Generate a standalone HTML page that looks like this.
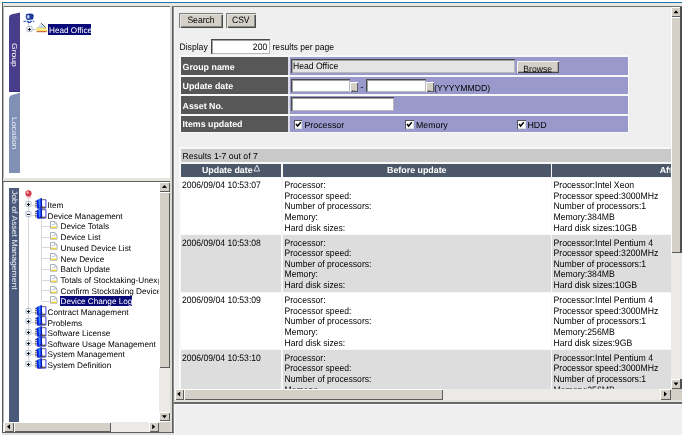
<!DOCTYPE html>
<html><head><meta charset="utf-8"><title>Device Change Log</title>
<style>
html,body{margin:0;padding:0;background:#fff;}
body{width:685px;height:440px;position:relative;overflow:hidden;font-family:"Liberation Sans",Arial,sans-serif;}
#root{position:absolute;left:0;top:0;width:685px;height:440px;will-change:transform;}
.b{position:absolute;display:block;}
#txt{font-family:"Liberation Sans",Arial,sans-serif;text-rendering:geometricPrecision;fill:#000;}
.vt{position:absolute;white-space:nowrap;writing-mode:vertical-rl;line-height:11px;text-align:left;transform:scaleX(0.84);transform-origin:50% 50%;text-rendering:geometricPrecision;}
</style></head><body><div id="root">
<div class="b" style="left:2px;top:2px;width:680px;height:1px;background:#1c78a8;"></div>
<div class="b" style="left:2px;top:3px;width:680px;height:3px;background:#e9e7e2;"></div>
<div class="b" style="left:2px;top:6px;width:680px;height:1px;background:#6f6f6f;"></div>
<div class="b" style="left:2px;top:2.6px;width:1px;height:432px;background:#585858;"></div>
<div class="b" style="left:3px;top:6px;width:1px;height:428px;background:#b4b4b4;"></div>
<div class="b" style="left:3px;top:177.75px;width:167px;height:2.75px;background:#e6e4de;"></div>
<div class="b" style="left:3px;top:180.5px;width:167px;height:1.5px;background:#606060;"></div>
<div class="b" style="left:170px;top:6px;width:2px;height:428px;background:#dddbd6;"></div>
<div class="b" style="left:172px;top:6px;width:1px;height:428px;background:#5f5f5f;"></div>
<div class="b" style="left:173px;top:6px;width:1px;height:428px;background:#8c8c8c;"></div>
<div class="b" style="left:2px;top:432px;width:172px;height:1px;background:#5f5f5f;"></div>
<div class="b" style="left:2px;top:433px;width:680px;height:2px;background:#e2e0da;"></div>
<div class="b" style="left:174px;top:7px;width:497px;height:382px;background:#efefef;"></div>
<div class="b" style="left:174px;top:7px;width:1.2px;height:382px;background:#f8f8f8;"></div>
<div class="b" style="left:174px;top:399.5px;width:508px;height:2.5px;background:#e4e2dc;"></div>
<div class="b" style="left:174px;top:402px;width:508px;height:1.75px;background:#666;"></div>
<div class="b" style="left:174px;top:403.75px;width:508px;height:31.25px;background:#efefef;"></div>
<div class="b" style="left:174px;top:404px;width:508px;height:1px;background:#fafafa;"></div>
<div class="b" style="left:174px;top:404px;width:1px;height:31px;background:#fafafa;"></div>
<svg class="b" style="left:0;top:0" width="30" height="180"><path d="M9,18 Q9,15 12,14.2 L20,12.4 L20,92 L9,92 Z" fill="#483d8b"/><path d="M9,91.2 H20 V92 H9 Z" fill="#2c2a82"/><path d="M9,99 Q9,96 12,95 L20,92.8 L20,173 L9,173 Z" fill="#8191b5"/></svg>
<div class="vt" style="left:9px;top:43px;width:11px;height:24px;color:#fff;font-size:8.6px;">Group</div>
<div class="vt" style="left:9px;top:117px;width:11px;height:34px;color:#e6eaf6;font-size:8.6px;">Location</div>
<svg class="b" style="left:22px;top:11.6px" width="14" height="12" viewBox="0 0 14 12"><path d="M4,2.2 Q7,1.2 10.5,1.8 L11.8,3.6 L11,7.6 L5,8.1 L3.6,5 Z" fill="#1c3a9c"/><path d="M4.7,3.4 L7.3,3.1 L7.6,6.2 L5.3,6.6 Z" fill="#c4d2f6"/><path d="M1.5,9.4 H12.3" stroke="#4a6cd0" stroke-width="1.1" stroke-dasharray="2.4 0.7"/><path d="M5.5,10.5 H9" stroke="#2a48b0" stroke-width="1"/></svg>
<div class="b" style="left:28px;top:23px;width:1px;height:4px;background:#c8c8c8;"></div>
<div class="b" style="left:32px;top:29px;width:5px;height:1px;background:#c8c8c8;"></div>
<svg class="b" style="left:25.9px;top:25.6px" width="7" height="7" viewBox="0 0 7 7"><rect x="0.9" y="0.5" width="5.1" height="5.1" rx="0.8" fill="#fcfcfd" stroke="#a6b6d0" stroke-width="0.9"/><path d="M1.9,3.45 H5" stroke="#111" stroke-width="1"/><path d="M3.45,1.9 V5" stroke="#111" stroke-width="1"/></svg>
<svg class="b" style="left:36px;top:22px" width="12" height="11" viewBox="0 0 12 11"><path d="M0.4,5.6 L2.4,5 L9.6,5 L10.8,5.8 L10.8,9.6 L0.4,9.6 Z" fill="#f5e067"/><path d="M2,5.6 L5.2,1.4 L9.4,5.6 Z" fill="#f2f6ff" stroke="#a8b8d8" stroke-width="0.6"/><path d="M4.2,4.8 L5.4,3.2 L7,4.8 Z" fill="#7fb8f4"/><path d="M5.2,1.3 L9.7,5.4" stroke="#2a2a2a" stroke-width="0.8"/><path d="M0.4,7.4 H10.8" stroke="#fff7b0" stroke-width="0.8"/><path d="M0.6,9.7 H10.8" stroke="#c83a22" stroke-width="0.9"/></svg>
<div class="b" style="left:48px;top:24px;width:43px;height:10.6px;background:#0a0a78;"></div>
<div class="b" style="left:9px;top:187.5px;width:10px;height:234px;background:#4b5a7b;"></div>
<div class="vt" style="left:8.5px;top:189.6px;width:11px;height:102px;color:#eceff8;font-size:8.65px;transform:scaleX(0.9);">Job of Asset Management</div>
<svg class="b" style="left:24px;top:189px" width="9" height="11"><ellipse cx="5" cy="8.3" rx="2.6" ry="1.2" fill="#f6ccd2"/><circle cx="4.5" cy="4.4" r="3.1" fill="#d23a4a"/><circle cx="3.7" cy="3.5" r="1.2" fill="#f8b0b8"/></svg>
<div class="b" style="left:28px;top:197px;width:1px;height:166px;background:#d8d8d8;"></div>
<div class="b" style="left:41px;top:220px;width:1px;height:81px;background:#d8d8d8;"></div>
<div class="b" style="left:32px;top:204.5px;width:4px;height:1px;background:#d8d8d8;"></div>
<svg class="b" style="left:25px;top:200.9px" width="7" height="7" viewBox="0 0 7 7"><rect x="0.9" y="0.5" width="5.1" height="5.1" rx="0.8" fill="#fcfcfd" stroke="#a6b6d0" stroke-width="0.9"/><path d="M1.9,3.45 H5" stroke="#111" stroke-width="1"/><path d="M3.45,1.9 V5" stroke="#111" stroke-width="1"/></svg>
<svg class="b" style="left:35px;top:197.7px" width="12" height="11" viewBox="0 0 12 11"><path d="M0,3.4 H2.6 M0,5.3 H2.6 M0,7.2 H2.6 M0,8.9 H2.6" stroke="#3a3a3a" stroke-width="0.8"/><path d="M7,1.8 L10.6,1.8 L10.6,8.6 L7,8.8 Z" fill="#fff"/><path d="M6.8,1.7 L10.8,1.7" stroke="#555" stroke-width="0.9"/><path d="M10.9,1.6 L10.9,10" stroke="#2a2af0" stroke-width="0.9"/><path d="M4,9.2 L10.6,8.6 L10.6,9.8 L4,10.4 Z" fill="#5c5a22"/><path d="M2.4,10.5 L10.9,10.2" stroke="#2222d8" stroke-width="0.7"/><path d="M1.5,2.2 L6.6,0.1 L7.2,9 L2.2,10.6 Z" fill="#0c20e6"/><path d="M3.4,1.5 L5.3,0.7 L5.6,7.5 L4,9.9 Z" fill="#2f86ff"/><path d="M5.9,0.4 L6.6,0.1 L7.2,9 L6.4,9.3 Z" fill="#0810a8"/></svg>
<div class="b" style="left:32px;top:215px;width:4px;height:1px;background:#d8d8d8;"></div>
<svg class="b" style="left:25px;top:211.4px" width="7" height="7" viewBox="0 0 7 7"><rect x="0.9" y="0.5" width="5.1" height="5.1" rx="0.8" fill="#fcfcfd" stroke="#a6b6d0" stroke-width="0.9"/><path d="M1.9,3.45 H5" stroke="#111" stroke-width="1"/></svg>
<svg class="b" style="left:35px;top:208.2px" width="12" height="11" viewBox="0 0 12 11"><path d="M0,3.4 H2.6 M0,5.3 H2.6 M0,7.2 H2.6 M0,8.9 H2.6" stroke="#3a3a3a" stroke-width="0.8"/><path d="M7,1.8 L10.6,1.8 L10.6,8.6 L7,8.8 Z" fill="#fff"/><path d="M6.8,1.7 L10.8,1.7" stroke="#555" stroke-width="0.9"/><path d="M10.9,1.6 L10.9,10" stroke="#2a2af0" stroke-width="0.9"/><path d="M4,9.2 L10.6,8.6 L10.6,9.8 L4,10.4 Z" fill="#5c5a22"/><path d="M2.4,10.5 L10.9,10.2" stroke="#2222d8" stroke-width="0.7"/><path d="M1.5,2.2 L6.6,0.1 L7.2,9 L2.2,10.6 Z" fill="#0c20e6"/><path d="M3.4,1.5 L5.3,0.7 L5.6,7.5 L4,9.9 Z" fill="#2f86ff"/><path d="M5.9,0.4 L6.6,0.1 L7.2,9 L6.4,9.3 Z" fill="#0810a8"/></svg>
<div class="b" style="left:32px;top:311.5px;width:4px;height:1px;background:#d8d8d8;"></div>
<svg class="b" style="left:25px;top:307.9px" width="7" height="7" viewBox="0 0 7 7"><rect x="0.9" y="0.5" width="5.1" height="5.1" rx="0.8" fill="#fcfcfd" stroke="#a6b6d0" stroke-width="0.9"/><path d="M1.9,3.45 H5" stroke="#111" stroke-width="1"/><path d="M3.45,1.9 V5" stroke="#111" stroke-width="1"/></svg>
<svg class="b" style="left:35px;top:304.7px" width="12" height="11" viewBox="0 0 12 11"><path d="M0,3.4 H2.6 M0,5.3 H2.6 M0,7.2 H2.6 M0,8.9 H2.6" stroke="#3a3a3a" stroke-width="0.8"/><path d="M7,1.8 L10.6,1.8 L10.6,8.6 L7,8.8 Z" fill="#fff"/><path d="M6.8,1.7 L10.8,1.7" stroke="#555" stroke-width="0.9"/><path d="M10.9,1.6 L10.9,10" stroke="#2a2af0" stroke-width="0.9"/><path d="M4,9.2 L10.6,8.6 L10.6,9.8 L4,10.4 Z" fill="#5c5a22"/><path d="M2.4,10.5 L10.9,10.2" stroke="#2222d8" stroke-width="0.7"/><path d="M1.5,2.2 L6.6,0.1 L7.2,9 L2.2,10.6 Z" fill="#0c20e6"/><path d="M3.4,1.5 L5.3,0.7 L5.6,7.5 L4,9.9 Z" fill="#2f86ff"/><path d="M5.9,0.4 L6.6,0.1 L7.2,9 L6.4,9.3 Z" fill="#0810a8"/></svg>
<div class="b" style="left:32px;top:322px;width:4px;height:1px;background:#d8d8d8;"></div>
<svg class="b" style="left:25px;top:318.4px" width="7" height="7" viewBox="0 0 7 7"><rect x="0.9" y="0.5" width="5.1" height="5.1" rx="0.8" fill="#fcfcfd" stroke="#a6b6d0" stroke-width="0.9"/><path d="M1.9,3.45 H5" stroke="#111" stroke-width="1"/><path d="M3.45,1.9 V5" stroke="#111" stroke-width="1"/></svg>
<svg class="b" style="left:35px;top:315.2px" width="12" height="11" viewBox="0 0 12 11"><path d="M0,3.4 H2.6 M0,5.3 H2.6 M0,7.2 H2.6 M0,8.9 H2.6" stroke="#3a3a3a" stroke-width="0.8"/><path d="M7,1.8 L10.6,1.8 L10.6,8.6 L7,8.8 Z" fill="#fff"/><path d="M6.8,1.7 L10.8,1.7" stroke="#555" stroke-width="0.9"/><path d="M10.9,1.6 L10.9,10" stroke="#2a2af0" stroke-width="0.9"/><path d="M4,9.2 L10.6,8.6 L10.6,9.8 L4,10.4 Z" fill="#5c5a22"/><path d="M2.4,10.5 L10.9,10.2" stroke="#2222d8" stroke-width="0.7"/><path d="M1.5,2.2 L6.6,0.1 L7.2,9 L2.2,10.6 Z" fill="#0c20e6"/><path d="M3.4,1.5 L5.3,0.7 L5.6,7.5 L4,9.9 Z" fill="#2f86ff"/><path d="M5.9,0.4 L6.6,0.1 L7.2,9 L6.4,9.3 Z" fill="#0810a8"/></svg>
<div class="b" style="left:32px;top:332.5px;width:4px;height:1px;background:#d8d8d8;"></div>
<svg class="b" style="left:25px;top:328.9px" width="7" height="7" viewBox="0 0 7 7"><rect x="0.9" y="0.5" width="5.1" height="5.1" rx="0.8" fill="#fcfcfd" stroke="#a6b6d0" stroke-width="0.9"/><path d="M1.9,3.45 H5" stroke="#111" stroke-width="1"/><path d="M3.45,1.9 V5" stroke="#111" stroke-width="1"/></svg>
<svg class="b" style="left:35px;top:325.7px" width="12" height="11" viewBox="0 0 12 11"><path d="M0,3.4 H2.6 M0,5.3 H2.6 M0,7.2 H2.6 M0,8.9 H2.6" stroke="#3a3a3a" stroke-width="0.8"/><path d="M7,1.8 L10.6,1.8 L10.6,8.6 L7,8.8 Z" fill="#fff"/><path d="M6.8,1.7 L10.8,1.7" stroke="#555" stroke-width="0.9"/><path d="M10.9,1.6 L10.9,10" stroke="#2a2af0" stroke-width="0.9"/><path d="M4,9.2 L10.6,8.6 L10.6,9.8 L4,10.4 Z" fill="#5c5a22"/><path d="M2.4,10.5 L10.9,10.2" stroke="#2222d8" stroke-width="0.7"/><path d="M1.5,2.2 L6.6,0.1 L7.2,9 L2.2,10.6 Z" fill="#0c20e6"/><path d="M3.4,1.5 L5.3,0.7 L5.6,7.5 L4,9.9 Z" fill="#2f86ff"/><path d="M5.9,0.4 L6.6,0.1 L7.2,9 L6.4,9.3 Z" fill="#0810a8"/></svg>
<div class="b" style="left:32px;top:343.25px;width:4px;height:1px;background:#d8d8d8;"></div>
<svg class="b" style="left:25px;top:339.65px" width="7" height="7" viewBox="0 0 7 7"><rect x="0.9" y="0.5" width="5.1" height="5.1" rx="0.8" fill="#fcfcfd" stroke="#a6b6d0" stroke-width="0.9"/><path d="M1.9,3.45 H5" stroke="#111" stroke-width="1"/><path d="M3.45,1.9 V5" stroke="#111" stroke-width="1"/></svg>
<svg class="b" style="left:35px;top:336.45px" width="12" height="11" viewBox="0 0 12 11"><path d="M0,3.4 H2.6 M0,5.3 H2.6 M0,7.2 H2.6 M0,8.9 H2.6" stroke="#3a3a3a" stroke-width="0.8"/><path d="M7,1.8 L10.6,1.8 L10.6,8.6 L7,8.8 Z" fill="#fff"/><path d="M6.8,1.7 L10.8,1.7" stroke="#555" stroke-width="0.9"/><path d="M10.9,1.6 L10.9,10" stroke="#2a2af0" stroke-width="0.9"/><path d="M4,9.2 L10.6,8.6 L10.6,9.8 L4,10.4 Z" fill="#5c5a22"/><path d="M2.4,10.5 L10.9,10.2" stroke="#2222d8" stroke-width="0.7"/><path d="M1.5,2.2 L6.6,0.1 L7.2,9 L2.2,10.6 Z" fill="#0c20e6"/><path d="M3.4,1.5 L5.3,0.7 L5.6,7.5 L4,9.9 Z" fill="#2f86ff"/><path d="M5.9,0.4 L6.6,0.1 L7.2,9 L6.4,9.3 Z" fill="#0810a8"/></svg>
<div class="b" style="left:32px;top:353.75px;width:4px;height:1px;background:#d8d8d8;"></div>
<svg class="b" style="left:25px;top:350.15px" width="7" height="7" viewBox="0 0 7 7"><rect x="0.9" y="0.5" width="5.1" height="5.1" rx="0.8" fill="#fcfcfd" stroke="#a6b6d0" stroke-width="0.9"/><path d="M1.9,3.45 H5" stroke="#111" stroke-width="1"/><path d="M3.45,1.9 V5" stroke="#111" stroke-width="1"/></svg>
<svg class="b" style="left:35px;top:346.95px" width="12" height="11" viewBox="0 0 12 11"><path d="M0,3.4 H2.6 M0,5.3 H2.6 M0,7.2 H2.6 M0,8.9 H2.6" stroke="#3a3a3a" stroke-width="0.8"/><path d="M7,1.8 L10.6,1.8 L10.6,8.6 L7,8.8 Z" fill="#fff"/><path d="M6.8,1.7 L10.8,1.7" stroke="#555" stroke-width="0.9"/><path d="M10.9,1.6 L10.9,10" stroke="#2a2af0" stroke-width="0.9"/><path d="M4,9.2 L10.6,8.6 L10.6,9.8 L4,10.4 Z" fill="#5c5a22"/><path d="M2.4,10.5 L10.9,10.2" stroke="#2222d8" stroke-width="0.7"/><path d="M1.5,2.2 L6.6,0.1 L7.2,9 L2.2,10.6 Z" fill="#0c20e6"/><path d="M3.4,1.5 L5.3,0.7 L5.6,7.5 L4,9.9 Z" fill="#2f86ff"/><path d="M5.9,0.4 L6.6,0.1 L7.2,9 L6.4,9.3 Z" fill="#0810a8"/></svg>
<div class="b" style="left:32px;top:364.5px;width:4px;height:1px;background:#d8d8d8;"></div>
<svg class="b" style="left:25px;top:360.9px" width="7" height="7" viewBox="0 0 7 7"><rect x="0.9" y="0.5" width="5.1" height="5.1" rx="0.8" fill="#fcfcfd" stroke="#a6b6d0" stroke-width="0.9"/><path d="M1.9,3.45 H5" stroke="#111" stroke-width="1"/><path d="M3.45,1.9 V5" stroke="#111" stroke-width="1"/></svg>
<svg class="b" style="left:35px;top:357.7px" width="12" height="11" viewBox="0 0 12 11"><path d="M0,3.4 H2.6 M0,5.3 H2.6 M0,7.2 H2.6 M0,8.9 H2.6" stroke="#3a3a3a" stroke-width="0.8"/><path d="M7,1.8 L10.6,1.8 L10.6,8.6 L7,8.8 Z" fill="#fff"/><path d="M6.8,1.7 L10.8,1.7" stroke="#555" stroke-width="0.9"/><path d="M10.9,1.6 L10.9,10" stroke="#2a2af0" stroke-width="0.9"/><path d="M4,9.2 L10.6,8.6 L10.6,9.8 L4,10.4 Z" fill="#5c5a22"/><path d="M2.4,10.5 L10.9,10.2" stroke="#2222d8" stroke-width="0.7"/><path d="M1.5,2.2 L6.6,0.1 L7.2,9 L2.2,10.6 Z" fill="#0c20e6"/><path d="M3.4,1.5 L5.3,0.7 L5.6,7.5 L4,9.9 Z" fill="#2f86ff"/><path d="M5.9,0.4 L6.6,0.1 L7.2,9 L6.4,9.3 Z" fill="#0810a8"/></svg>
<div class="b" style="left:42px;top:225.5px;width:8px;height:1px;background:#d8d8d8;"></div>
<svg class="b" style="left:49.6px;top:220.8px" width="8" height="8" viewBox="0 0 8 8"><path d="M0.5,0.5 L4.8,0.5 L7,2.6 L7,7.2 L0.5,7.2 Z" fill="#fff" stroke="#929cb2" stroke-width="0.8"/><path d="M4.6,0.6 L4.6,2.8 L6.9,2.8" fill="none" stroke="#929cb2" stroke-width="0.6"/><path d="M1,6.4 L6.8,6.4" stroke="#f2d43a" stroke-width="1.5"/><path d="M1.8,3.6 L4.6,3.6" stroke="#aab4d8" stroke-width="0.7"/></svg>
<div class="b" style="left:42px;top:236.5px;width:8px;height:1px;background:#d8d8d8;"></div>
<svg class="b" style="left:49.6px;top:231.8px" width="8" height="8" viewBox="0 0 8 8"><path d="M0.5,0.5 L4.8,0.5 L7,2.6 L7,7.2 L0.5,7.2 Z" fill="#fff" stroke="#929cb2" stroke-width="0.8"/><path d="M4.6,0.6 L4.6,2.8 L6.9,2.8" fill="none" stroke="#929cb2" stroke-width="0.6"/><path d="M1,6.4 L6.8,6.4" stroke="#f2d43a" stroke-width="1.5"/><path d="M1.8,3.6 L4.6,3.6" stroke="#aab4d8" stroke-width="0.7"/></svg>
<div class="b" style="left:42px;top:247px;width:8px;height:1px;background:#d8d8d8;"></div>
<svg class="b" style="left:49.6px;top:242.3px" width="8" height="8" viewBox="0 0 8 8"><path d="M0.5,0.5 L4.8,0.5 L7,2.6 L7,7.2 L0.5,7.2 Z" fill="#fff" stroke="#929cb2" stroke-width="0.8"/><path d="M4.6,0.6 L4.6,2.8 L6.9,2.8" fill="none" stroke="#929cb2" stroke-width="0.6"/><path d="M1,6.4 L6.8,6.4" stroke="#f2d43a" stroke-width="1.5"/><path d="M1.8,3.6 L4.6,3.6" stroke="#aab4d8" stroke-width="0.7"/></svg>
<div class="b" style="left:42px;top:258px;width:8px;height:1px;background:#d8d8d8;"></div>
<svg class="b" style="left:49.6px;top:253.3px" width="8" height="8" viewBox="0 0 8 8"><path d="M0.5,0.5 L4.8,0.5 L7,2.6 L7,7.2 L0.5,7.2 Z" fill="#fff" stroke="#929cb2" stroke-width="0.8"/><path d="M4.6,0.6 L4.6,2.8 L6.9,2.8" fill="none" stroke="#929cb2" stroke-width="0.6"/><path d="M1,6.4 L6.8,6.4" stroke="#f2d43a" stroke-width="1.5"/><path d="M1.8,3.6 L4.6,3.6" stroke="#aab4d8" stroke-width="0.7"/></svg>
<div class="b" style="left:42px;top:268.8px;width:8px;height:1px;background:#d8d8d8;"></div>
<svg class="b" style="left:49.6px;top:264.1px" width="8" height="8" viewBox="0 0 8 8"><path d="M0.5,0.5 L4.8,0.5 L7,2.6 L7,7.2 L0.5,7.2 Z" fill="#fff" stroke="#929cb2" stroke-width="0.8"/><path d="M4.6,0.6 L4.6,2.8 L6.9,2.8" fill="none" stroke="#929cb2" stroke-width="0.6"/><path d="M1,6.4 L6.8,6.4" stroke="#f2d43a" stroke-width="1.5"/><path d="M1.8,3.6 L4.6,3.6" stroke="#aab4d8" stroke-width="0.7"/></svg>
<div class="b" style="left:42px;top:279.5px;width:8px;height:1px;background:#d8d8d8;"></div>
<svg class="b" style="left:49.6px;top:274.8px" width="8" height="8" viewBox="0 0 8 8"><path d="M0.5,0.5 L4.8,0.5 L7,2.6 L7,7.2 L0.5,7.2 Z" fill="#fff" stroke="#929cb2" stroke-width="0.8"/><path d="M4.6,0.6 L4.6,2.8 L6.9,2.8" fill="none" stroke="#929cb2" stroke-width="0.6"/><path d="M1,6.4 L6.8,6.4" stroke="#f2d43a" stroke-width="1.5"/><path d="M1.8,3.6 L4.6,3.6" stroke="#aab4d8" stroke-width="0.7"/></svg>
<div class="b" style="left:42px;top:290.25px;width:8px;height:1px;background:#d8d8d8;"></div>
<svg class="b" style="left:49.6px;top:285.55px" width="8" height="8" viewBox="0 0 8 8"><path d="M0.5,0.5 L4.8,0.5 L7,2.6 L7,7.2 L0.5,7.2 Z" fill="#fff" stroke="#929cb2" stroke-width="0.8"/><path d="M4.6,0.6 L4.6,2.8 L6.9,2.8" fill="none" stroke="#929cb2" stroke-width="0.6"/><path d="M1,6.4 L6.8,6.4" stroke="#f2d43a" stroke-width="1.5"/><path d="M1.8,3.6 L4.6,3.6" stroke="#aab4d8" stroke-width="0.7"/></svg>
<div class="b" style="left:42px;top:300.75px;width:8px;height:1px;background:#d8d8d8;"></div>
<svg class="b" style="left:49.6px;top:296.05px" width="8" height="8" viewBox="0 0 8 8"><path d="M0.5,0.5 L4.8,0.5 L7,2.6 L7,7.2 L0.5,7.2 Z" fill="#fff" stroke="#929cb2" stroke-width="0.8"/><path d="M4.6,0.6 L4.6,2.8 L6.9,2.8" fill="none" stroke="#929cb2" stroke-width="0.6"/><path d="M1,6.4 L6.8,6.4" stroke="#f2d43a" stroke-width="1.5"/><path d="M1.8,3.6 L4.6,3.6" stroke="#aab4d8" stroke-width="0.7"/></svg>
<div class="b" style="left:60px;top:295.95px;width:72px;height:10.1px;background:#0a0a78;"></div>
<div class="b" style="left:159px;top:182px;width:10.75px;height:239px;background:#eceae6;"></div>
<div class="b" style="left:159px;top:182px;width:10.75px;height:9.75px;background:#d4d0c8;box-shadow:inset 1px 1px 0 #fff,inset -1px -1px 0 #5c5c5c;"></div>
<div class="b" style="left:159px;top:191.75px;width:10.75px;height:176px;background:#d4d0c8;box-shadow:inset 1px 1px 0 #fff,inset -1px -1px 0 #5c5c5c;"></div>
<div class="b" style="left:159px;top:411.6px;width:10.75px;height:9.65px;background:#d4d0c8;box-shadow:inset 1px 1px 0 #fff,inset -1px -1px 0 #5c5c5c;"></div>
<div class="b" style="left:3px;top:421.5px;width:156px;height:10.5px;background:#eceae6;"></div>
<div class="b" style="left:4px;top:421.5px;width:9.5px;height:10.5px;background:#d4d0c8;box-shadow:inset 1px 1px 0 #fff,inset -1px -1px 0 #5c5c5c;"></div>
<div class="b" style="left:13.5px;top:421.5px;width:97.5px;height:10.5px;background:#d4d0c8;box-shadow:inset 1px 1px 0 #fff,inset -1px -1px 0 #5c5c5c;"></div>
<div class="b" style="left:148.5px;top:421.5px;width:10px;height:10.5px;background:#d4d0c8;box-shadow:inset 1px 1px 0 #fff,inset -1px -1px 0 #5c5c5c;"></div>
<div class="b" style="left:158.5px;top:421.5px;width:11px;height:10.5px;background:#d4d0c8;"></div>
<div class="b" style="left:179px;top:12.5px;width:44px;height:15px;background:#d4d0c8;box-shadow:inset 1px 1px 0 #7c7c7c,inset 2px 2px 0 #e6e4de,inset -1px -1px 0 #484848,inset -2px -2px 0 #8a8a86;"></div>
<div class="b" style="left:226px;top:12.5px;width:29.5px;height:15px;background:#d4d0c8;box-shadow:inset 1px 1px 0 #7c7c7c,inset 2px 2px 0 #e6e4de,inset -1px -1px 0 #484848,inset -2px -2px 0 #8a8a86;"></div>
<div class="b" style="left:210.5px;top:39px;width:59px;height:14.5px;background:#fff;box-shadow:inset 1px 1px 0 #4a4a4a,inset 2px 2px 0 #a0a0a0,inset -1px -1px 0 #b8b8b8;"></div>
<div class="b" style="left:179.3px;top:55.4px;width:449.5px;height:77.8px;background:#f8f8f8;"></div>
<div class="b" style="left:180.5px;top:57px;width:107px;height:17.9px;background:#575757;"></div>
<div class="b" style="left:287.5px;top:57px;width:2px;height:17.9px;background:#dcdcea;"></div>
<div class="b" style="left:289.5px;top:57px;width:338px;height:17.9px;background:#9999cc;"></div>
<div class="b" style="left:180.5px;top:76.75px;width:107px;height:17.25px;background:#575757;"></div>
<div class="b" style="left:287.5px;top:76.75px;width:2px;height:17.25px;background:#dcdcea;"></div>
<div class="b" style="left:289.5px;top:76.75px;width:338px;height:17.25px;background:#9999cc;"></div>
<div class="b" style="left:180.5px;top:96px;width:107px;height:17.5px;background:#575757;"></div>
<div class="b" style="left:287.5px;top:96px;width:2px;height:17.5px;background:#dcdcea;"></div>
<div class="b" style="left:289.5px;top:96px;width:338px;height:17.5px;background:#9999cc;"></div>
<div class="b" style="left:180.5px;top:115.75px;width:107px;height:15.9px;background:#575757;"></div>
<div class="b" style="left:287.5px;top:115.75px;width:2px;height:15.9px;background:#dcdcea;"></div>
<div class="b" style="left:289.5px;top:115.75px;width:338px;height:15.9px;background:#9999cc;"></div>
<div class="b" style="left:291px;top:59px;width:223.5px;height:13.9px;background:#e4e4e4;box-shadow:inset 1px 1px 0 #4a4a4a,inset 2px 2px 0 #a0a0a0,inset -1px -1px 0 #b8b8b8;"></div>
<div class="b" style="left:516.9px;top:61px;width:41.9px;height:12.25px;background:#d4d0c8;box-shadow:inset 1px 1px 0 #f4f4f4,inset -1px -1px 0 #4a4a4a,inset -2px -2px 0 #a8a8a0;"></div>
<div class="b" style="left:524px;top:72.3px;width:27.5px;height:0.7px;background:#333;"></div>
<div class="b" style="left:291px;top:78.5px;width:58.75px;height:13.75px;background:#fff;box-shadow:inset 1px 1px 0 #4a4a4a,inset 2px 2px 0 #a0a0a0,inset -1px -1px 0 #b8b8b8;"></div>
<div class="b" style="left:350px;top:81.6px;width:7.75px;height:10.9px;background:#d4d0c8;box-shadow:inset 1px 1px 0 #fff,inset -1px -1px 0 #5c5c5c;"></div>
<div class="b" style="left:366.25px;top:78.5px;width:59.35px;height:13.75px;background:#fff;box-shadow:inset 1px 1px 0 #4a4a4a,inset 2px 2px 0 #a0a0a0,inset -1px -1px 0 #b8b8b8;"></div>
<div class="b" style="left:426px;top:81.6px;width:7.5px;height:10.9px;background:#d4d0c8;box-shadow:inset 1px 1px 0 #fff,inset -1px -1px 0 #5c5c5c;"></div>
<div class="b" style="left:291px;top:97.25px;width:102.75px;height:14px;background:#fff;box-shadow:inset 1px 1px 0 #4a4a4a,inset 2px 2px 0 #a0a0a0,inset -1px -1px 0 #b8b8b8;"></div>
<div class="b" style="left:293.75px;top:120px;width:8.5px;height:8.5px;background:#fff;box-shadow:inset 1px 1px 0 #555,inset -1px -1px 0 #ddd;"></div><svg class="b" style="left:293.75px;top:120px" width="9" height="9"><path d="M2,4 L3.6,6 L6.8,2.2" stroke="#000" stroke-width="1.5" fill="none"/></svg>
<div class="b" style="left:405.25px;top:120px;width:8.5px;height:8.5px;background:#fff;box-shadow:inset 1px 1px 0 #555,inset -1px -1px 0 #ddd;"></div><svg class="b" style="left:405.25px;top:120px" width="9" height="9"><path d="M2,4 L3.6,6 L6.8,2.2" stroke="#000" stroke-width="1.5" fill="none"/></svg>
<div class="b" style="left:517px;top:120px;width:8.5px;height:8.5px;background:#fff;box-shadow:inset 1px 1px 0 #555,inset -1px -1px 0 #ddd;"></div><svg class="b" style="left:517px;top:120px" width="9" height="9"><path d="M2,4 L3.6,6 L6.8,2.2" stroke="#000" stroke-width="1.5" fill="none"/></svg>
<div class="b" style="left:179.3px;top:146.8px;width:491.2px;height:242px;background:#f8f8f8;"></div>
<div class="b" style="left:180.5px;top:148.6px;width:490.4px;height:13.1px;background:#c9c9c9;"></div>
<div class="b" style="left:180.5px;top:163.5px;width:100px;height:13px;background:#4c5869;"></div>
<div class="b" style="left:282.5px;top:163.5px;width:268px;height:13px;background:#4c5869;"></div>
<div class="b" style="left:552.25px;top:163.5px;width:118.6px;height:13px;background:#4c5869;"></div>
<svg class="b" style="left:253px;top:164px" width="8" height="9"><path d="M1,7 L4,1 L6.5,7 Z" fill="none" stroke="#fff" stroke-width="0.8"/></svg>
<div class="b" style="left:174px;top:7px;width:497px;height:381.5px;overflow:hidden">
<div class="b" style="left:6.5px;top:170.5px;width:100px;height:56.25px;background:#fff;"></div>
<div class="b" style="left:108.5px;top:170.5px;width:268px;height:56.25px;background:#fff;"></div>
<div class="b" style="left:378.25px;top:170.5px;width:118.5px;height:56.25px;background:#fff;"></div>
<div class="b" style="left:6.5px;top:227.6px;width:100px;height:57.7px;background:#dddddd;"></div>
<div class="b" style="left:108.5px;top:227.6px;width:268px;height:57.7px;background:#dddddd;"></div>
<div class="b" style="left:378.25px;top:227.6px;width:118.5px;height:57.7px;background:#dddddd;"></div>
<div class="b" style="left:6.5px;top:285.5px;width:100px;height:56.25px;background:#fff;"></div>
<div class="b" style="left:108.5px;top:285.5px;width:268px;height:56.25px;background:#fff;"></div>
<div class="b" style="left:378.25px;top:285.5px;width:118.5px;height:56.25px;background:#fff;"></div>
<div class="b" style="left:6.5px;top:342.9px;width:100px;height:57.7px;background:#dddddd;"></div>
<div class="b" style="left:108.5px;top:342.9px;width:268px;height:57.7px;background:#dddddd;"></div>
<div class="b" style="left:378.25px;top:342.9px;width:118.5px;height:57.7px;background:#dddddd;"></div>
</div>
<div class="b" style="left:670.5px;top:7px;width:11px;height:381.75px;background:#eceae6;"></div>
<div class="b" style="left:670.5px;top:7px;width:11px;height:10px;background:#d4d0c8;box-shadow:inset 1px 1px 0 #fff,inset -1px -1px 0 #5c5c5c;"></div>
<div class="b" style="left:670.5px;top:17px;width:11px;height:236px;background:#d4d0c8;box-shadow:inset 1px 1px 0 #fff,inset -1px -1px 0 #5c5c5c;"></div>
<div class="b" style="left:670.5px;top:378.5px;width:11px;height:10.25px;background:#d4d0c8;box-shadow:inset 1px 1px 0 #fff,inset -1px -1px 0 #5c5c5c;"></div>
<div class="b" style="left:680.4px;top:7px;width:1.2px;height:246px;background:#505050;"></div>
<div class="b" style="left:680.4px;top:378.5px;width:1.2px;height:10.25px;background:#505050;"></div>
<div class="b" style="left:174px;top:388.75px;width:497px;height:10.75px;background:#eceae6;"></div>
<div class="b" style="left:174.5px;top:388.75px;width:9px;height:10.75px;background:#d4d0c8;box-shadow:inset 1px 1px 0 #fff,inset -1px -1px 0 #5c5c5c;"></div>
<div class="b" style="left:184px;top:388.75px;width:259px;height:10.75px;background:#d4d0c8;box-shadow:inset 1px 1px 0 #fff,inset -1px -1px 0 #5c5c5c;"></div>
<div class="b" style="left:660px;top:388.75px;width:10.5px;height:10.75px;background:#d4d0c8;box-shadow:inset 1px 1px 0 #fff,inset -1px -1px 0 #5c5c5c;"></div>
<div class="b" style="left:670.5px;top:388.75px;width:11px;height:10.75px;background:#d4d0c8;"></div>
<svg class="b" style="left:0;top:0" width="685" height="440"><polygon points="161.9,188.1 166.9,188.1 164.4,185.1" fill="#000"/><polygon points="161.9,415.2 166.9,415.2 164.4,418.2" fill="#000"/><polygon points="10.0,424.2 10.0,429.2 7.0,426.8" fill="#000"/><polygon points="152.2,424.2 152.2,429.2 155.2,426.8" fill="#000"/><polygon points="673.5,13.2 678.5,13.2 676.0,10.2" fill="#000"/><polygon points="673.5,382.4 678.5,382.4 676.0,385.4" fill="#000"/><polygon points="180.2,391.6 180.2,396.6 177.2,394.1" fill="#000"/><polygon points="664.0,391.6 664.0,396.6 667.0,394.1" fill="#000"/></svg>
<svg class="b" id="txt" style="left:0;top:0" width="685" height="440"><defs><clipPath id="c-tree"><rect x="0" y="183" width="158.6" height="238"/></clipPath><clipPath id="c-data"><rect x="174" y="7" width="496.5" height="381.7"/></clipPath><clipPath id="c-aft"><rect x="552" y="160" width="118.5" height="20"/></clipPath></defs>
<text transform="translate(49,32.75) scale(1,1)" font-size="8.2" fill="#fff">Head Office</text>
<text transform="translate(201,22.8) scale(1,1.08)" font-size="8.6" text-anchor="middle">Search</text>
<text transform="translate(240.75,22.8) scale(1,1.08)" font-size="8.6" text-anchor="middle">CSV</text>
<text transform="translate(179.5,50) scale(1,1.08)" font-size="8.6">Display</text>
<text transform="translate(267.2,50) scale(1,1.08)" font-size="8.6" text-anchor="end">200</text>
<text transform="translate(272.5,50) scale(1,1.08)" font-size="8.6">results per page</text>
<text transform="translate(182.5,69.6) scale(1,1)" font-size="8.85" fill="#fff" font-weight="bold">Group name</text>
<text transform="translate(182.5,89) scale(1,1)" font-size="8.85" fill="#fff" font-weight="bold">Update date</text>
<text transform="translate(182.5,108.6) scale(1,1)" font-size="8.85" fill="#fff" font-weight="bold">Asset No.</text>
<text transform="translate(182.5,127.2) scale(1,1)" font-size="8.85" fill="#fff" font-weight="bold">Items updated</text>
<text transform="translate(293,69) scale(1,1.08)" font-size="8.6">Head Office</text>
<text transform="translate(537.7,71.7) scale(1,1.04)" font-size="8.6" text-anchor="middle">Browse</text>
<text transform="translate(351.4,91.2) scale(1,1)" font-size="6.5">..</text>
<text transform="translate(360.6,90) scale(1,1.08)" font-size="8.6">-</text>
<text transform="translate(427.3,91.2) scale(1,1)" font-size="6.5">..</text>
<text transform="translate(434.2,91) scale(1,1)" font-size="8.7">(YYYYMMDD)</text>
<text transform="translate(304.5,127.5) scale(1,1)" font-size="8.8">Processor</text>
<text transform="translate(416,127.5) scale(1,1)" font-size="8.8">Memory</text>
<text transform="translate(527.5,127.5) scale(1,1)" font-size="8.8">HDD</text>
<text transform="translate(182.5,158.6) scale(1,1)" font-size="8.7">Results 1-7 out of 7</text>
<text transform="translate(227.3,173.4) scale(1,1)" font-size="8.85" fill="#fff" font-weight="bold" text-anchor="middle">Update date</text>
<text transform="translate(416.8,173.4) scale(1,1)" font-size="8.85" fill="#fff" font-weight="bold" text-anchor="middle">Before update</text>
<g clip-path="url(#c-tree)">
<text transform="translate(47.5,208.1) scale(1,1)" font-size="8.2">Item</text>
<text transform="translate(47.5,218.6) scale(1,1)" font-size="8.2">Device Management</text>
<text transform="translate(47.5,315.1) scale(1,1)" font-size="8.2">Contract Management</text>
<text transform="translate(47.5,325.6) scale(1,1)" font-size="8.2">Problems</text>
<text transform="translate(47.5,336.1) scale(1,1)" font-size="8.2">Software License</text>
<text transform="translate(47.5,346.85) scale(1,1)" font-size="8.2">Software Usage Management</text>
<text transform="translate(47.5,357.35) scale(1,1)" font-size="8.2">System Management</text>
<text transform="translate(47.5,368.1) scale(1,1)" font-size="8.2">System Definition</text>
<text transform="translate(60.5,229.1) scale(1,1)" font-size="8.2">Device Totals</text>
<text transform="translate(60.5,240.1) scale(1,1)" font-size="8.2">Device List</text>
<text transform="translate(60.5,250.6) scale(1,1)" font-size="8.2">Unused Device List</text>
<text transform="translate(60.5,261.6) scale(1,1)" font-size="8.2">New Device</text>
<text transform="translate(60.5,272.4) scale(1,1)" font-size="8.2">Batch Update</text>
<text transform="translate(60.5,283.1) scale(1,1)" font-size="8.2">Totals of Stocktaking-Unexpected</text>
<text transform="translate(60.5,293.85) scale(1,1)" font-size="8.2">Confirm Stocktaking Devices</text>
<text transform="translate(60.5,304.35) scale(1,1)" font-size="8.2" fill="#fff">Device Change Log</text>
</g>
<g clip-path="url(#c-data)">
<text transform="translate(182,188) scale(1,1.08)" font-size="8.6">2006/09/04 10:53:07</text>
<text transform="translate(284.5,188) scale(1,1.08)" font-size="8.6">Processor:</text>
<text transform="translate(553.5,188) scale(1,1.08)" font-size="8.7">Processor:Intel Xeon</text>
<text transform="translate(284.5,199) scale(1,1.08)" font-size="8.6">Processor speed:</text>
<text transform="translate(553.5,199) scale(1,1.08)" font-size="8.7">Processor speed:3000MHz</text>
<text transform="translate(284.5,209) scale(1,1.08)" font-size="8.6">Number of processors:</text>
<text transform="translate(553.5,209) scale(1,1.08)" font-size="8.7">Number of processors:1</text>
<text transform="translate(284.5,220) scale(1,1.08)" font-size="8.6">Memory:</text>
<text transform="translate(553.5,220) scale(1,1.08)" font-size="8.7">Memory:384MB</text>
<text transform="translate(284.5,231) scale(1,1.08)" font-size="8.6">Hard disk sizes:</text>
<text transform="translate(553.5,231) scale(1,1.08)" font-size="8.7">Hard disk sizes:10GB</text>
<text transform="translate(182,246) scale(1,1.08)" font-size="8.6">2006/09/04 10:53:08</text>
<text transform="translate(284.5,246) scale(1,1.08)" font-size="8.6">Processor:</text>
<text transform="translate(553.5,246) scale(1,1.08)" font-size="8.7">Processor:Intel Pentium 4</text>
<text transform="translate(284.5,256) scale(1,1.08)" font-size="8.6">Processor speed:</text>
<text transform="translate(553.5,256) scale(1,1.08)" font-size="8.7">Processor speed:3200MHz</text>
<text transform="translate(284.5,267) scale(1,1.08)" font-size="8.6">Number of processors:</text>
<text transform="translate(553.5,267) scale(1,1.08)" font-size="8.7">Number of processors:1</text>
<text transform="translate(284.5,277) scale(1,1.08)" font-size="8.6">Memory:</text>
<text transform="translate(553.5,277) scale(1,1.08)" font-size="8.7">Memory:384MB</text>
<text transform="translate(284.5,288) scale(1,1.08)" font-size="8.6">Hard disk sizes:</text>
<text transform="translate(553.5,288) scale(1,1.08)" font-size="8.7">Hard disk sizes:10GB</text>
<text transform="translate(182,303) scale(1,1.08)" font-size="8.6">2006/09/04 10:53:09</text>
<text transform="translate(284.5,303) scale(1,1.08)" font-size="8.6">Processor:</text>
<text transform="translate(553.5,303) scale(1,1.08)" font-size="8.7">Processor:Intel Pentium 4</text>
<text transform="translate(284.5,314) scale(1,1.08)" font-size="8.6">Processor speed:</text>
<text transform="translate(553.5,314) scale(1,1.08)" font-size="8.7">Processor speed:3000MHz</text>
<text transform="translate(284.5,324) scale(1,1.08)" font-size="8.6">Number of processors:</text>
<text transform="translate(553.5,324) scale(1,1.08)" font-size="8.7">Number of processors:1</text>
<text transform="translate(284.5,335) scale(1,1.08)" font-size="8.6">Memory:</text>
<text transform="translate(553.5,335) scale(1,1.08)" font-size="8.7">Memory:256MB</text>
<text transform="translate(284.5,346) scale(1,1.08)" font-size="8.6">Hard disk sizes:</text>
<text transform="translate(553.5,346) scale(1,1.08)" font-size="8.7">Hard disk sizes:9GB</text>
<text transform="translate(182,361) scale(1,1.08)" font-size="8.6">2006/09/04 10:53:10</text>
<text transform="translate(284.5,361) scale(1,1.08)" font-size="8.6">Processor:</text>
<text transform="translate(553.5,361) scale(1,1.08)" font-size="8.7">Processor:Intel Pentium 4</text>
<text transform="translate(284.5,371) scale(1,1.08)" font-size="8.6">Processor speed:</text>
<text transform="translate(553.5,371) scale(1,1.08)" font-size="8.7">Processor speed:3000MHz</text>
<text transform="translate(284.5,382) scale(1,1.08)" font-size="8.6">Number of processors:</text>
<text transform="translate(553.5,382) scale(1,1.08)" font-size="8.7">Number of processors:1</text>
<text transform="translate(284.5,393) scale(1,1.08)" font-size="8.6">Memory:</text>
<text transform="translate(553.5,393) scale(1,1.08)" font-size="8.7">Memory:256MB</text>
<text transform="translate(284.5,404) scale(1,1.08)" font-size="8.6">Hard disk sizes:</text>
<text transform="translate(553.5,404) scale(1,1.08)" font-size="8.7">Hard disk sizes:9GB</text>
</g>
<g clip-path="url(#c-aft)">
<text transform="translate(659.7,173.4) scale(1,1)" font-size="8.85" fill="#fff" font-weight="bold">After update</text>
</g>
</svg>
</div></body></html>
